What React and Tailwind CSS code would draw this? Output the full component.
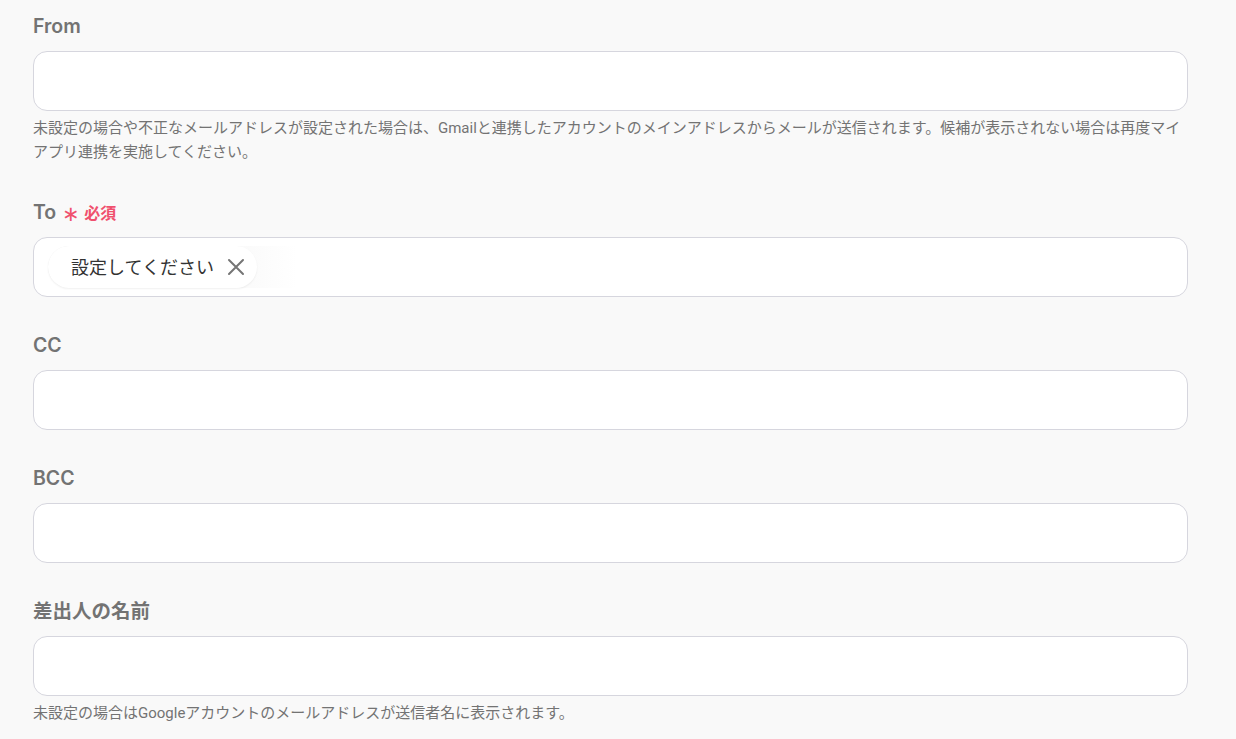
import React from 'react';

const FONT = { fontFamily: '"Inter", "Noto Sans CJK JP", sans-serif' };

const Field = ({ label, required, help, children }) => (
  <div className="mb-[33px]">
    <div className="flex items-center h-[28px] pt-[4px] mb-[12px] text-[19.5px] font-semibold text-[#737373]">
      <span>{label}</span>
      {required && (
        <span className="ml-[6px] flex items-center text-[#f0506e] text-[16px] font-bold">
          <span className="text-[21px] leading-none mr-[4px] font-normal">∗</span>必須
        </span>
      )}
    </div>
    <div className="h-[60px] bg-white border border-[#d6d6de] rounded-[14px] flex items-center px-[14px]">
      {children}
    </div>
    {help && (
      <p
        className="mt-[5px] text-[15px] leading-[24px] text-[#737373]"
        style={{ fontFamily: '"Roboto", "Noto Sans CJK JP", sans-serif' }}
      >
        {help}
      </p>
    )}
  </div>
);

export default function App() {
  return (
    <div className="min-h-screen bg-[#f9f9f9] pt-[11px]" style={FONT}>
      <div className="w-[1155px] ml-[33px]">
        <Field
          label="From"
          help="未設定の場合や不正なメールアドレスが設定された場合は、Gmailと連携したアカウントのメインアドレスからメールが送信されます。候補が表示されない場合は再度マイアプリ連携を実施してください。"
        />
        <Field label="To" required>
          <div className="flex items-center rounded-l-full bg-gradient-to-r from-[#efefef] via-[#f4f4f4] to-transparent pr-[40px]">
            <div className="flex items-center h-[42px] bg-white rounded-full pl-[23px] pr-[12px] shadow-[0_1px_2px_rgba(0,0,0,0.06)]">
              <span className="text-[18px] text-[#333]">設定してください</span>
              <svg className="ml-[13px]" width="18" height="18" viewBox="0 0 18 18" fill="none" stroke="#757575" strokeWidth="2" strokeLinecap="round">
                <path d="M2 2L16 16M16 2L2 16" />
              </svg>
            </div>
          </div>
        </Field>
        <Field label="CC" />
        <Field label="BCC" />
        <Field
          label="差出人の名前"
          help="未設定の場合はGoogleアカウントのメールアドレスが送信者名に表示されます。"
        />
      </div>
    </div>
  );
}
